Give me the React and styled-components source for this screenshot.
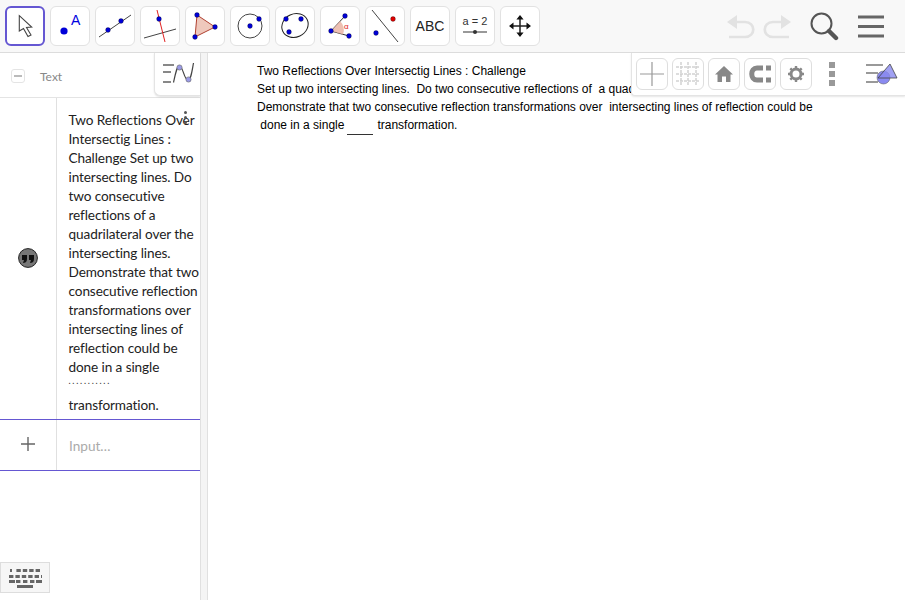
import React from "react";
import styled, { createGlobalStyle } from "styled-components";

const Global = createGlobalStyle`
  html, body { margin: 0; padding: 0; background: #fff; overflow: hidden; }
  #root { width: 905px; height: 600px; }
`;
const Page = styled.div`
  width: 905px; height: 600px; display: flex; flex-direction: column;
  font-family: "Liberation Sans", Arial, sans-serif; overflow: hidden;
`;
const Toolbar = styled.header`
  height: 53px; flex: none; box-sizing: border-box; background: #f8f8f8; border-bottom: 1px solid #dcdcdc;
  display: flex; align-items: flex-start; padding: 6px 20px 0 5px;
`;
const ToolGroup = styled.div`display: flex; gap: 5px;`;
const Tool = styled.div`
  width: 40px; height: 40px; box-sizing: border-box; background: #fff;
  border: ${p => (p.$active ? "2px solid #6557d2" : "1px solid #e2e2e2")};
  border-radius: 6px; display: flex; align-items: center; justify-content: center;
`;
const Abc = styled.span`font: 14px "Liberation Sans", sans-serif; color: #222;`;
const Right = styled.div`margin-left: auto; display: flex; align-items: center; gap: 18px; height: 40px;`;
const Main = styled.main`flex: 1; display: flex; min-height: 0;`;
const Algebra = styled.section`width: 200px; flex: none; position: relative; display: flex; flex-direction: column;`;
const Splitter = styled.div`width: 8px; flex: none; background: #f4f4f4; border-left: 1px solid #e0e0e0; border-right: 1px solid #e0e0e0; box-sizing: border-box;`;
const Header = styled.div`
  height: 45px; flex: none; box-sizing: border-box; border-bottom: 1px solid #e4e4e4; padding: 2px 0 0 11px;
  display: flex; align-items: center; gap: 15px;
  font: 12px Lato, sans-serif; color: #888;
`;
const Collapse = styled.span`
  width: 14px; height: 14px; box-sizing: border-box; border: 1px solid #e4e4e4; border-radius: 3px;
  display: flex; align-items: center; justify-content: center;
  &::before { content: ""; width: 8px; height: 2px; background: #bbb; }
`;
const Row = styled.div`display: flex; height: ${p => p.$h}px; flex: none; box-sizing: border-box;
  border-bottom: 1px solid #6557d2;`;
const Marble = styled.div`
  width: 57px; flex: none; box-sizing: border-box; border-right: 1px solid #e0e0e0; padding-bottom: 2px;
  display: flex; align-items: center; justify-content: center;
`;
const Body = styled.div`flex: 1; padding: 13px 0 0 11.5px; font: 13.6px/19px Lato, sans-serif; color: #222; white-space: nowrap;`;
const TextLine = styled.div`height: 19px; line-height: 19px; letter-spacing: -0.1px;`;
const Dots = styled.div`height: 19px; font-size: 9px; line-height: 8px; letter-spacing: 1.75px; color: #333;`;
const Placeholder = styled.div`flex: 1; padding: 18px 0 0 12px; font: 13.6px/16px Lato, sans-serif; color: #aaa;`;
const More = styled.div`position: absolute; left: 183.5px; top: 58px; display: flex; flex-direction: column; gap: 2px;
  & > i { width: 3px; height: 3px; border-radius: 50%; background: #555; display: block; }`;
const Toggle = styled.div`
  position: absolute; right: 0; top: 0; width: 46px; height: 43px; box-sizing: border-box; background: #fff;
  border-left: 1px solid #e4e4e4; border-bottom: 1px solid #e4e4e4; border-radius: 0 0 0 6px;
  box-shadow: 0 1px 2px rgba(0,0,0,.12); display: flex; align-items: center; justify-content: center;
`;
const Keyboard = styled.div`
  position: absolute; left: 0; top: 509px; width: 50px; height: 31px; box-sizing: border-box;
  background: #f6f6f6; border: 1px solid #ddd; display: flex; align-items: center; justify-content: center;
`;
const Graphics = styled.section`flex: 1; position: relative; padding: 9px 0 0 49px; background: #fff;`;
const Note = styled.div`font-size: 12px; line-height: 18px; color: #000; white-space: pre;`;
const Blank = styled.span`display: inline-block; width: 26px; border-bottom: 1px solid #333; height: 18px; vertical-align: -6px; margin: 0 4px 0 3px;`;
const StyleBar = styled.div`
  position: absolute; right: 0; top: 0; width: 274px; height: 43px; box-sizing: border-box; background: #fff;
  border-left: 1px solid #e4e4e4; border-bottom: 1px solid #e4e4e4; border-radius: 0 0 0 4px;
  box-shadow: 0 1px 2px rgba(0,0,0,.1);
  display: flex; align-items: center; gap: 4px; padding: 0 0 0 4px;
`;
const BarBtn = styled.div`
  width: 32px; height: 32px; box-sizing: border-box; border: 1px solid #dedede; border-radius: 6px;
  display: flex; align-items: center; justify-content: center; background: #fff;
`;
const Kebab = styled.div`width: 32px; margin-right: 14px; display: flex; flex-direction: column; align-items: center; gap: 3px;
  & > i { width: 6px; height: 6px; background: #999; display: block; }`;

const B = "#0000d8";
const Pt = ({ x, y, r = 2.4, c = B }) => <circle cx={x} cy={y} r={r} fill={c} stroke="#000" strokeWidth=".3" />;
const S = ({ children }) => <svg width={32} height={32} viewBox="0 0 32 32">{children}</svg>;

const tools = [
  <S><path d="M10.3 5.7L22.7 17 17.5 17.5 22 25 19 26.5 14.5 18.5 10.3 21z" fill="#fff" stroke="#444" strokeWidth="1.1" /></S>,
  <S><circle cx="10" cy="21" r="3.6" fill={B} /><text x="17" y="15" fontSize="14" fill="#0000e0" fontFamily="Liberation Sans">A</text></S>,
  <S><path d="M0 27L32 5" stroke="#444" /><Pt x="9" y="20" /><Pt x="22" y="11" /></S>,
  <S><path d="M0 28L32 19" stroke="#444" /><path d="M13 0L21 32" stroke="#e02020" /><Pt x="15" y="9" /></S>,
  <S><path d="M8 5L26 17 6 27z" fill="#e8b0a0" fillOpacity=".7" stroke="#b04030" /><Pt x="8" y="5" /><Pt x="26" y="17" /><Pt x="6" y="27" /></S>,
  <S><circle cx="16" cy="16" r="12" fill="none" stroke="#444" /><Pt x="16" y="16" /><Pt x="25" y="9" /></S>,
  <S><ellipse cx="16" cy="15.5" rx="13.5" ry="11.5" fill="none" stroke="#222" transform="rotate(-25 16 15.5)" /><Pt x="7" y="9" /><Pt x="22" y="9" /><Pt x="10" y="22" /></S>,
  <S><path d="M21 6L7 21 25 26" fill="none" stroke="#333" /><path d="M7 21L16 11A13 13 0 0 1 19 24.5z" fill="#e8b0a0" fillOpacity=".8" /><Pt x="21" y="6" /><Pt x="7" y="21" /><Pt x="25" y="26" /><text x="20" y="19" fontSize="8" fill="#e02020" fontFamily="Liberation Sans">α</text></S>,
  <S><path d="M3 0L29 32" stroke="#444" /><Pt x="7" y="23" /><Pt x="24" y="9" c="#e00000" /></S>,
  null,
  <S><text x="16" y="15" textAnchor="middle" fontSize="11" fill="#333" fontFamily="Liberation Sans">a = 2</text><path d="M4 22H28" stroke="#555" strokeWidth="1.2" /><circle cx="16" cy="22" r="2" fill="#333" /></S>,
  <S><path d="M16 7V25M7 16H25" stroke="#222" strokeWidth="1.5" /><path d="M16 5l3.6 4.5h-7.2zM16 27l3.6-4.5h-7.2zM5 16l4.5-3.6v7.2zM27 16l-4.5-3.6v7.2z" fill="#111" /></S>,
];

const lines = [
  "Two Reflections Over", "Intersectig Lines :", "Challenge Set up two", "intersecting lines. Do", "two consecutive",
  "reflections of a", "quadrilateral over the", "intersecting lines.", "Demonstrate that two", "consecutive reflection",
  "transformations over", "intersecting lines of", "reflection could be", "done in a single",
];

export default function App() {
  return (
    <Page>
      <Global />
      <Toolbar>
        <ToolGroup>
          {tools.map((t, i) => (
            <Tool key={i} $active={i === 0}>
              {t || <Abc>ABC</Abc>}
            </Tool>
          ))}
        </ToolGroup>
        <Right>
          <svg width="66" height="28" viewBox="0 0 66 28">
            <path d="M8 10H19C30 10 30 25 19 25H3" stroke="#e2e2e2" strokeWidth="2.7" fill="none" />
            <path d="M1 10L11 3V17z" fill="#e2e2e2" />
            <path d="M58 10H47C36 10 36 25 47 25H63" stroke="#e2e2e2" strokeWidth="2.7" fill="none" />
            <path d="M65 10L55 3V17z" fill="#e2e2e2" />
          </svg>
          <svg width="29" height="30" viewBox="0 0 29 30">
            <circle cx="11.5" cy="12.5" r="10" fill="none" stroke="#555" strokeWidth="2" />
            <path d="M19 20l7 7" stroke="#555" strokeWidth="4.4" strokeLinecap="round" />
          </svg>
          <svg width="28" height="26" viewBox="0 0 28 26">
            <path d="M1 4H27M1 13.5H27M1 23H27" stroke="#666" strokeWidth="3" />
          </svg>
        </Right>
      </Toolbar>
      <Main>
        <Algebra>
          <Header><Collapse />Text</Header>
          <Row $h={322}>
            <Marble>
              <svg width="20" height="20" viewBox="0 0 20 20">
                <circle cx="10" cy="10" r="9.4" fill="#777" stroke="#222" />
                <path d="M4 7h5v4c0 3-2 4-4 4l1-3H4zM11 7h5v4c0 3-2 4-4 4l1-3h-2z" fill="#111" />
              </svg>
            </Marble>
            <Body>
              {lines.map(l => <TextLine key={l}>{l}</TextLine>)}
              <Dots>...........</Dots>
              <TextLine>transformation.</TextLine>
            </Body>
          </Row>
          <Row $h={51}>
            <Marble>
              <svg width="16" height="16" viewBox="0 0 16 16"><path d="M8 1V15M1 8H15" stroke="#666" strokeWidth="1.4" /></svg>
            </Marble>
            <Placeholder>Input…</Placeholder>
          </Row>
          <More><i /><i /><i /></More>
          <Toggle>
            <svg width="34" height="26" viewBox="0 0 34 26">
              <path d="M2 4h11M2 11h8M2 21h8" stroke="#888" strokeWidth="2" fill="none" />
              <path d="M12.5 21.5C15 10 16 5 18.5 5 22 5 23 19 27 19 30 19 31 10 32.5 2" stroke="#444" strokeWidth="1.2" fill="none" />
              <circle cx="18.5" cy="6.5" r="2.6" fill="#9a9ae6" stroke="#666" strokeWidth=".6" />
              <circle cx="27.5" cy="18.5" r="2.6" fill="#9a9ae6" stroke="#666" strokeWidth=".6" />
            </svg>
          </Toggle>
          <Keyboard>
            <svg width="34" height="20" viewBox="0 0 34 20">
              {[0,1,2,3,4,5].map(i => <rect key={i} x={i * 6.4 + 2} y="1" width={i === 0 ? 2 : 4.4} height="3" fill="#666" />)}
              {[0,1,2,3,4,5].map(i => <rect key={i} x={i * 6.4 + 1} y="7" width={i === 5 ? 2 : 4.4} height="3" fill="#666" />)}
              {[0,1,2,3,4].map(i => <rect key={i} x={[1,8,15,22,28][i]} y="12" width={i === 0 || i === 4 ? 6 : 4.4} height="3" fill="#666" />)}
              <rect x="9" y="17" width="16" height="3" fill="#666" />
            </svg>
          </Keyboard>
        </Algebra>
        <Splitter />
        <Graphics>
          <Note>Two Reflections Over Intersectig Lines : Challenge</Note>
          <Note>Set up two intersecting lines.  Do two consecutive reflections of  a quadrilateral over the intersecting lines.</Note>
          <Note>Demonstrate that two consecutive reflection transformations over  intersecting lines of reflection could be</Note>
          <Note> done in a single<Blank />transformation.</Note>
          <StyleBar>
            <BarBtn><svg width="30" height="30" viewBox="0 0 30 30"><path d="M15 3V27M3 15H27" stroke="#999" strokeWidth="1.2" /></svg></BarBtn>
            <BarBtn><svg width="28" height="28" viewBox="0 0 28 28"><path d="M7 2V26M14 2V26M22 2V26M2 7H26M2 14H26M2 21H26" stroke="#d2d2d2" strokeWidth="1.5" strokeDasharray="3 1" /></svg></BarBtn>
            <BarBtn><svg width="20" height="20" viewBox="0 0 20 20"><path d="M10 2L19 10.5H16.5V18H12V12.5H8V18H3.5V10.5H1z" fill="#888" /></svg></BarBtn>
            <BarBtn><svg width="26" height="20" viewBox="0 0 26 20"><path d="M16 4H10C3 4 3 16 10 16H16" stroke="#888" strokeWidth="5" fill="none" /><path d="M19 1.5h5v5h-5zM19 13.5h5v5h-5z" fill="#888" /></svg></BarBtn>
            <BarBtn><svg width="18" height="18" viewBox="0 0 18 18"><circle cx="9" cy="9" r="5" fill="none" stroke="#888" strokeWidth="3" /><path d="M9 1V4M9 14V17M1 9H4M14 9H17M3.3 3.3L5.5 5.5M12.5 12.5L14.7 14.7M3.3 14.7L5.5 12.5M12.5 5.5L14.7 3.3" stroke="#888" strokeWidth="2.4" /></svg></BarBtn>
            <Kebab><i /><i /><i /></Kebab>
            <svg width="34" height="26" viewBox="0 0 34 26">
              <path d="M0 4H17M0 12H12M0 21H12" stroke="#999" strokeWidth="1.8" />
              <circle cx="17.5" cy="16.5" r="6.5" fill="#8a8af0" stroke="#555" strokeWidth=".5" />
              <path d="M24 3L31 17H12z" fill="#8a8af0" fillOpacity=".8" stroke="#444" strokeWidth=".8" />
            </svg>
          </StyleBar>
        </Graphics>
      </Main>
    </Page>
  );
}
